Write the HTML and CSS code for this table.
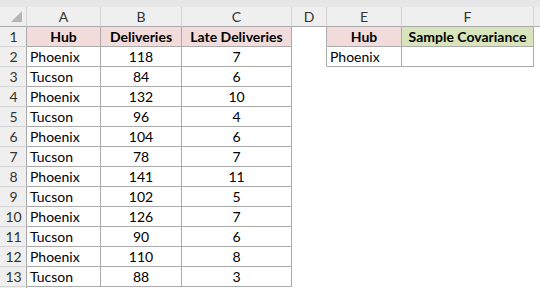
FILE: index.html
```html
<!DOCTYPE html>
<html>
<head>
<meta charset="utf-8">
<link rel="stylesheet" href="styles.css">
</head>
<body>
<div class="sheet">
  <div class="strip"></div>
  <div class="corner"><span class="tri"></span></div>
  <div class="ch">A</div><div class="ch">B</div><div class="ch">C</div><div class="ch">D</div><div class="ch">E</div><div class="ch">F</div><div class="ch last"></div>

  <div class="rh">1</div>
  <div class="c g hd pink">Hub</div><div class="c g hd pink">Deliveries</div><div class="c g hd pink">Late Deliveries</div><div class="c gr"></div><div class="c g hd pink">Hub</div><div class="c g hd green">Sample Covariance</div><div class="c"></div>

  <div class="rh">2</div>
  <div class="c g">Phoenix</div><div class="c g n">118</div><div class="c g n">7</div><div class="c gr"></div><div class="c g">Phoenix</div><div class="c g"></div><div class="c"></div>

  <div class="rh">3</div>
  <div class="c g">Tucson</div><div class="c g n">84</div><div class="c g n">6</div><div class="c"></div><div class="c"></div><div class="c"></div><div class="c"></div>

  <div class="rh">4</div>
  <div class="c g">Phoenix</div><div class="c g n">132</div><div class="c g n">10</div><div class="c"></div><div class="c"></div><div class="c"></div><div class="c"></div>

  <div class="rh">5</div>
  <div class="c g">Tucson</div><div class="c g n">96</div><div class="c g n">4</div><div class="c"></div><div class="c"></div><div class="c"></div><div class="c"></div>

  <div class="rh">6</div>
  <div class="c g">Phoenix</div><div class="c g n">104</div><div class="c g n">6</div><div class="c"></div><div class="c"></div><div class="c"></div><div class="c"></div>

  <div class="rh">7</div>
  <div class="c g">Tucson</div><div class="c g n">78</div><div class="c g n">7</div><div class="c"></div><div class="c"></div><div class="c"></div><div class="c"></div>

  <div class="rh">8</div>
  <div class="c g">Phoenix</div><div class="c g n">141</div><div class="c g n">11</div><div class="c"></div><div class="c"></div><div class="c"></div><div class="c"></div>

  <div class="rh">9</div>
  <div class="c g">Tucson</div><div class="c g n">102</div><div class="c g n">5</div><div class="c"></div><div class="c"></div><div class="c"></div><div class="c"></div>

  <div class="rh">10</div>
  <div class="c g">Phoenix</div><div class="c g n">126</div><div class="c g n">7</div><div class="c"></div><div class="c"></div><div class="c"></div><div class="c"></div>

  <div class="rh">11</div>
  <div class="c g">Tucson</div><div class="c g n">90</div><div class="c g n">6</div><div class="c"></div><div class="c"></div><div class="c"></div><div class="c"></div>

  <div class="rh">12</div>
  <div class="c g">Phoenix</div><div class="c g n">110</div><div class="c g n">8</div><div class="c"></div><div class="c"></div><div class="c"></div><div class="c"></div>

  <div class="rh">13</div>
  <div class="c g">Tucson</div><div class="c g n">88</div><div class="c g n">3</div><div class="c"></div><div class="c"></div><div class="c"></div><div class="c"></div>

  <div class="rh"></div>
  <div class="c"></div><div class="c"></div><div class="c"></div><div class="c"></div><div class="c"></div><div class="c"></div><div class="c"></div>
</div>
</body>
</html>
```

FILE: styles.css
```css
html, body {
  margin: 0;
  padding: 0;
  background: #ffffff;
}
.sheet {
  width: 540px;
  height: 288px;
  overflow: hidden;
  display: grid;
  grid-template-columns: 27px 74px 81px 110px 35px 75px 132px 6px;
  grid-template-rows: 7px repeat(15, 20px);
  font-family: Lato, "Liberation Sans", sans-serif;
  font-size: 14px;
  color: #000;
}
.sheet > div {
  box-sizing: border-box;
  min-width: 0;
  white-space: nowrap;
  overflow: hidden;
}
.strip {
  grid-column: 1 / -1;
  background: #e6e6e6;
}
.corner {
  position: relative;
  background: #efefef;
  border-right: 1px solid #d4d4d4;
  border-bottom: 1px solid #a9a9a9;
}
.tri {
  position: absolute;
  left: 11px;
  top: 4px;
  width: 0;
  height: 0;
  border-left: 11px solid transparent;
  border-bottom: 11px solid #b5b5b5;
}
.ch {
  background: #efefef;
  border-right: 1px solid #d4d4d4;
  border-bottom: 1px solid #a9a9a9;
  color: #333;
  text-align: center;
  line-height: 19px;
}
.ch.last {
  border-right: none;
}
.rh {
  background: #efefef;
  border-right: 1px solid #a9a9a9;
  border-bottom: 1px solid #d4d4d4;
  color: #333;
  text-align: center;
  line-height: 19px;
  padding-left: 1px;
}
.c {
  border-right: 1px solid transparent;
  border-bottom: 1px solid transparent;
  line-height: 19px;
  padding-left: 3px;
}
.c.g {
  border-right-color: #ababab;
  border-bottom-color: #ababab;
}
.c.gr {
  border-right-color: #ababab;
}
.n {
  text-align: center;
  padding-left: 0;
}
.hd {
  font-weight: bold;
  text-align: center;
  padding-left: 0;
}
.pink {
  background: #f2dcdb;
}
.green {
  background: #d8e4bc;
}
```
